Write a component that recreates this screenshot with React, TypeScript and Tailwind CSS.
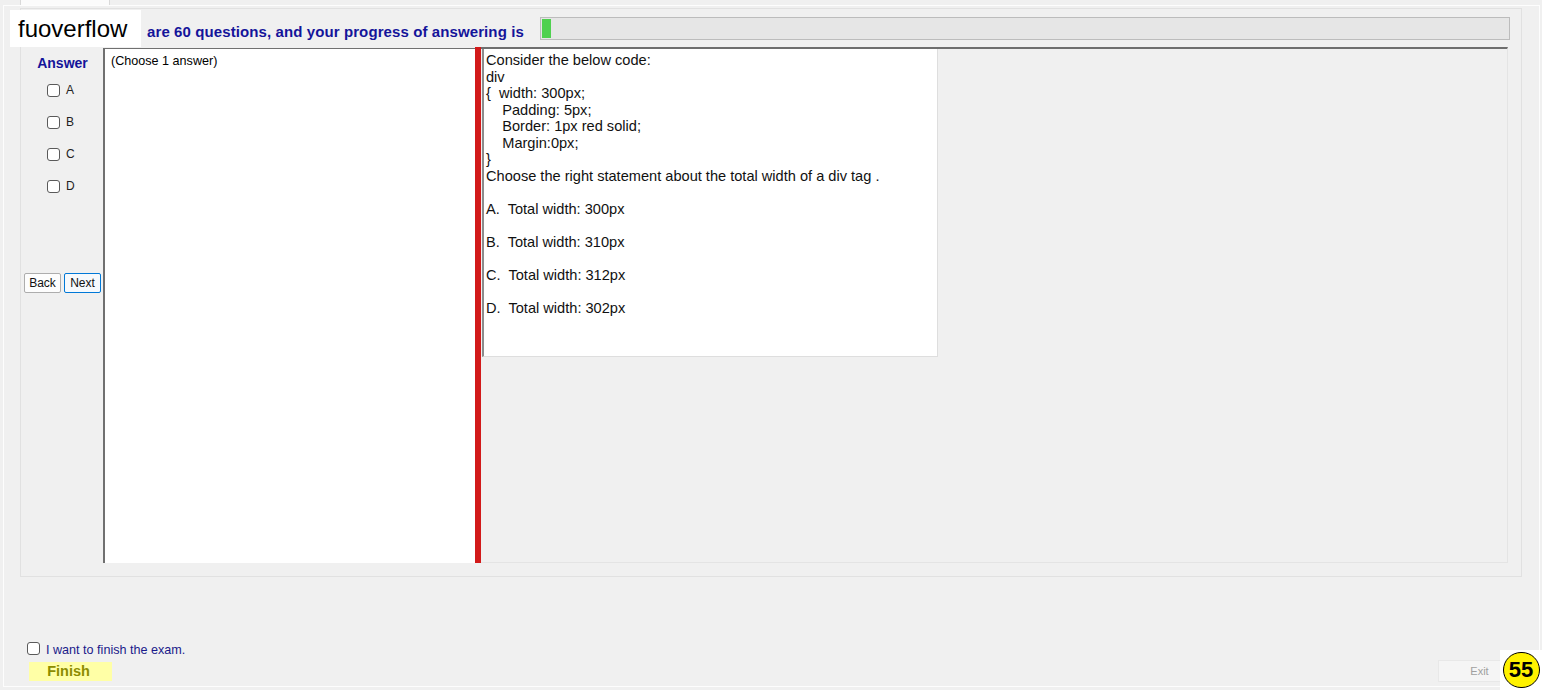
import React from 'react';

const Check = () => (
  <span className="inline-block w-[13px] h-[13px] rounded-[3px] border border-[#5a5a5a] bg-white" />
);

const codeLines = [
  'Consider the below code:',
  'div',
  '{  width: 300px;',
  '    Padding: 5px;',
  '    Border: 1px red solid;',
  '    Margin:0px;',
  '}',
  'Choose the right statement about the total width of a div tag .',
  '',
  'A.  Total width: 300px',
  '',
  'B.  Total width: 310px',
  '',
  'C.  Total width: 312px',
  '',
  'D.  Total width: 302px',
];

const App = () => {
  return (
    <div className="relative w-[1542px] h-[690px] overflow-hidden bg-[#f0f0f0] font-['Liberation_Sans',Arial,sans-serif] text-black">
      {/* tab strip */}
      <div className="h-[5px] flex">
        <div className="ml-[20px] w-[90px] h-[5px] bg-[#fbfbfb] border-x border-[#d9d9d9]" />
      </div>

      {/* outer frame */}
      <div className="ml-[3px] w-[1537px] h-[682px] border border-[#fdfdfd] flex flex-col">
        {/* group box */}
        <div className="mt-[2px] ml-[16px] w-[1502px] h-[569px] border border-[#e1e1e1] flex flex-col">
          {/* header */}
          <div className="mt-[8px] h-[23px] flex items-start">
            <span className="ml-[126px] mt-[6px] text-[15px] leading-[18px] tracking-[0.1px] font-bold text-[#14149a] whitespace-nowrap">
              are 60 questions, and your progress of answering is
            </span>
            <div className="ml-auto mr-[11px] w-[970px] h-[23px] border border-[#bcbcbc] bg-[#e6e6e6] p-[1px]">
              <div className="w-[9px] h-full bg-[#4fd14f]" />
            </div>
          </div>

          {/* content */}
          <div className="mt-[7px] ml-[1px] h-[516px] flex">
            {/* answer column */}
            <div className="w-[81px] flex flex-col">
              <div className="pt-[8px] text-center text-[14px] leading-[16px] font-bold text-[#14149a]">Answer</div>
              <div className="mt-[3px] flex flex-col">
                {['A', 'B', 'C', 'D'].map((l) => (
                  <div key={l} className="h-[32px] pl-[25px] flex items-center gap-[6px] text-[12px] text-[#222]">
                    <Check />
                    <span>{l}</span>
                  </div>
                ))}
              </div>
              <div className="mt-[71px] ml-[2px] flex gap-[3px]">
                <button className="w-[37px] h-[20px] border border-[#adadad] bg-[#fdfdfd] text-[12px] leading-[18px] text-[#111] rounded-[2px]">
                  Back
                </button>
                <button className="w-[37px] h-[20px] border border-[#0078d7] bg-[#f6f9fc] text-[12px] leading-[18px] text-[#111] rounded-[2px]">
                  Next
                </button>
              </div>
            </div>

            {/* choose panel */}
            <div className="w-[372px] h-[515px] mt-[1px] bg-white border-l-2 border-t border-[#707070] pl-[6px] pt-[5px] text-[12.6px] leading-[14px]">
              (Choose 1 answer)
            </div>

            {/* splitter */}
            <div className="w-[6px] bg-[#d21a1a]" />

            {/* question panel */}
            <div className="w-[1027px] h-[516px] border-t-2 border-[#6e6e6e] border-r border-b border-r-[#e4e4e4] border-b-[#e4e4e4] bg-[#f0f0f0] pl-[1px]">
              <div className="w-[456px] h-[308px] bg-white border-l-2 border-[#8c8c8c] border-r border-b border-r-[#dedede] border-b-[#dedede] pl-[2px] pt-[3px] text-[14.6px] leading-[16.5px] text-[#111]">
                {codeLines.map((line, i) => (
                  <div key={i} className="whitespace-pre h-[16.5px]">
                    {line}
                  </div>
                ))}
              </div>
            </div>
          </div>
        </div>

        {/* bottom area */}
        <div className="flex-1 flex items-end justify-between pb-[5px]">
          <div className="pl-[23px] flex flex-col">
            <div className="h-[14px] flex items-center gap-[6px]">
              <Check />
              <span className="mt-[3px] text-[12.6px] leading-[14px] text-[#1a1a8a]">I want to finish the exam.</span>
            </div>
            <button className="mt-[7px] ml-[2px] w-[83px] h-[19px] bg-[#ffffa6] text-[14.5px] leading-[19px] font-bold text-[#8c8c00] pr-[4px]">
              Finish
            </button>
          </div>
          <button className="mr-[38px] mb-[-1px] w-[63px] h-[22px] bg-[#f5f5f5] border border-[#e8e8e8] text-[11px] leading-[20px] text-[#a0a0a0] pl-[20px]">
            Exit
          </button>
        </div>
      </div>

      {/* watermark */}
      <div className="absolute left-[10px] top-[10px] w-[131px] h-[37px] bg-white pl-[8px] text-[24px] leading-[37px] text-black">
        fuoverflow
      </div>

      {/* badge */}
      <div className="absolute right-0 bottom-0 w-[42px] h-[40px] bg-white flex items-center justify-center">
        <div className="w-[37px] h-[36px] rounded-full bg-[#fff200] border-[1.5px] border-black flex items-center justify-center text-[22px] font-bold leading-none">
          55
        </div>
      </div>
    </div>
  );
};

export default App;
